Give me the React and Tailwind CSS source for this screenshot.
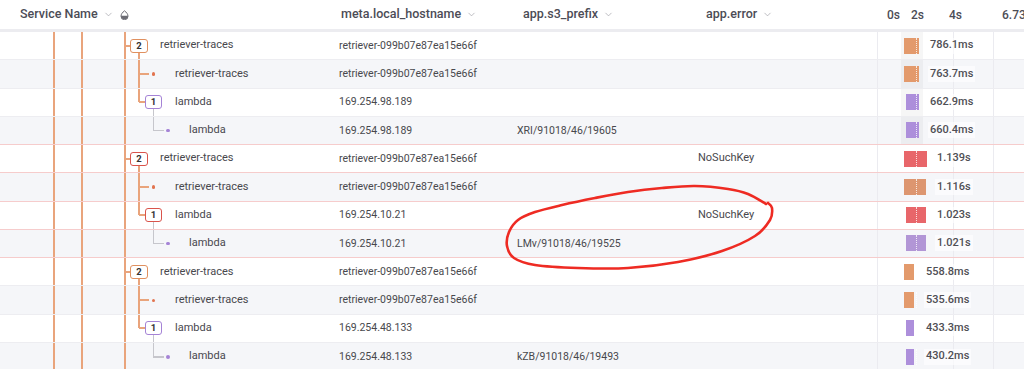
import React from 'react';
import { ChevronDown } from 'lucide-react';

const ORANGE = '#e0905f';
const RED = '#d9544c';
const PURPLE = '#a583d6';

const rows = [
  { type: 'p', box: ORANGE, name: 'retriever-traces', host: 'retriever-099b07e87ea15e66f', prefix: '', error: '', bar: '#e39a6c', barL: 44, barW: 15, label: '786.1ms', labelL: 70, band: true },
  { type: 'd1', dot: '#e2744f', name: 'retriever-traces', host: 'retriever-099b07e87ea15e66f', prefix: '', error: '', bar: '#e39a6c', barL: 44, barW: 15, label: '763.7ms', labelL: 70, band: true },
  { type: 'b', box: PURPLE, name: 'lambda', host: '169.254.98.189', prefix: '', error: '', bar: '#ad8fdb', barL: 46, barW: 13, label: '662.9ms', labelL: 70, band: true },
  { type: 'd2', dot: PURPLE, name: 'lambda', host: '169.254.98.189', prefix: 'XRI/91018/46/19605', error: '', bar: '#ad8fdb', barL: 46, barW: 13, label: '660.4ms', labelL: 70, band: true, pinkBottom: true },
  { type: 'p', box: RED, name: 'retriever-traces', host: 'retriever-099b07e87ea15e66f', prefix: '', error: 'NoSuchKey', bar: '#e8666a', barL: 44, barW: 23, label: '1.139s', labelL: 77, pinkBottom: true },
  { type: 'd1', dot: '#e2744f', name: 'retriever-traces', host: 'retriever-099b07e87ea15e66f', prefix: '', error: '', bar: '#dd9670', barL: 44, barW: 22, label: '1.116s', labelL: 77, pinkBottom: true },
  { type: 'b', box: RED, name: 'lambda', host: '169.254.10.21', prefix: '', error: 'NoSuchKey', bar: '#e8666a', barL: 46, barW: 20, label: '1.023s', labelL: 77, pinkBottom: true },
  { type: 'd2', dot: PURPLE, name: 'lambda', host: '169.254.10.21', prefix: 'LMv/91018/46/19525', error: '', bar: '#b296d6', barL: 46, barW: 20, label: '1.021s', labelL: 77, pinkBottom: true },
  { type: 'p', box: ORANGE, name: 'retriever-traces', host: 'retriever-099b07e87ea15e66f', prefix: '', error: '', bar: '#e39a6c', barL: 44, barW: 10, label: '558.8ms', labelL: 66 },
  { type: 'd1', dot: '#e2744f', name: 'retriever-traces', host: 'retriever-099b07e87ea15e66f', prefix: '', error: '', bar: '#e39a6c', barL: 44, barW: 10, label: '535.6ms', labelL: 66 },
  { type: 'b', box: PURPLE, name: 'lambda', host: '169.254.48.133', prefix: '', error: '', bar: '#ad8fdb', barL: 46, barW: 8, label: '433.3ms', labelL: 66 },
  { type: 'd2', dot: PURPLE, name: 'lambda', host: '169.254.48.133', prefix: 'kZB/91018/46/19493', error: '', bar: '#ad8fdb', barL: 46, barW: 8, label: '430.2ms', labelL: 66 },
];

const textPad = { p: 'pl-[160px]', d1: 'pl-[175px]', b: 'pl-[175px]', d2: 'pl-[189px]' };

// hand-drawn annotation loop
const loop = [[766,204],[748,194],[728,189],[695,186],[662,188],[628,192],[595,198],[562,205],[535,212],[518,220],[509,232],[507,246],[514,258],[535,265],[578,268],[628,268],[678,262],[722,251],[755,236],[770,220],[772,208],[768,203]];

function smoothPath(pts) {
  let d = `M${pts[0][0]},${pts[0][1]}`;
  for (let i = 0; i < pts.length - 1; i++) {
    const p0 = pts[i - 1] || pts[i];
    const p1 = pts[i];
    const p2 = pts[i + 1];
    const p3 = pts[i + 2] || p2;
    const c1 = [p1[0] + (p2[0] - p0[0]) / 6, p1[1] + (p2[1] - p0[1]) / 6];
    const c2 = [p2[0] - (p3[0] - p1[0]) / 6, p2[1] - (p3[1] - p1[1]) / 6];
    d += ` C${c1[0]},${c1[1]} ${c2[0]},${c2[1]} ${p2[0]},${p2[1]}`;
  }
  return d;
}

function TreeLines({ row }) {
  const line = 'absolute bg-[#e9a47c]';
  const gray = 'absolute bg-[#c6c6cc]';
  return (
    <>
      <div className={`${line} left-[53px] top-0 bottom-0 w-[2px]`} />
      <div className={`${line} left-[81px] top-0 bottom-0 w-[2px]`} />
      <div className={`${line} left-[124px] top-0 bottom-0 w-[2px]`} />
      {row.type === 'p' && (
        <>
          <div className={`${line} left-[125px] top-[calc(50%-1px)] w-[6px] h-[2px]`} />
          <div className={`${line} left-[138px] top-[calc(50%+7px)] bottom-0 w-[2px]`} />
          <div
            className="absolute left-[130px] top-[calc(50%-7px)] w-[18px] h-[14px] rounded-[3px] border-[1.5px] bg-white flex items-center justify-center text-[9.5px] font-bold text-[#333]"
            style={{ borderColor: row.box }}
          >
            2
          </div>
        </>
      )}
      {row.type === 'd1' && (
        <>
          <div className={`${line} left-[138px] top-0 bottom-0 w-[2px]`} />
          <div className={`${line} left-[139px] top-[calc(50%-1px)] w-[10px] h-[2px]`} />
          <div className="absolute left-[151.5px] top-[calc(50%-1.5px)] w-[3.5px] h-[3.5px] rounded-full" style={{ background: row.dot }} />
        </>
      )}
      {row.type === 'b' && (
        <>
          <div className={`${line} left-[138px] top-0 h-1/2 w-[2px]`} />
          <div className={`${line} left-[139px] top-[calc(50%-1px)] w-[7px] h-[2px]`} />
          <div className={`${gray} left-[152.5px] top-[calc(50%+7px)] bottom-0 w-[1.5px]`} />
          <div
            className="absolute left-[145px] top-[calc(50%-7px)] w-[17px] h-[14px] rounded-[3px] border-[1.5px] bg-white flex items-center justify-center text-[9.5px] font-bold text-[#333]"
            style={{ borderColor: row.box }}
          >
            1
          </div>
        </>
      )}
      {row.type === 'd2' && (
        <>
          <div className={`${gray} left-[152.5px] top-0 h-1/2 w-[1.5px]`} />
          <div className={`${gray} left-[153px] top-[calc(50%-0.5px)] w-[11px] h-[1.5px]`} />
          <div className="absolute left-[166px] top-[calc(50%-1.5px)] w-[3.5px] h-[3.5px] rounded-full" style={{ background: row.dot }} />
        </>
      )}
    </>
  );
}

function Row({ row, index }) {
  const bg = index % 2 === 0 ? 'bg-white' : 'bg-[#f5f6f9]';
  const border = row.pinkBottom ? 'border-[#f6cccc]' : 'border-[#ededf1]';
  return (
    <div className={`flex h-[28.27px] border-b ${border} ${bg} text-[10.5px] text-[#48484d]`}>
      <div className={`relative w-[339px] shrink-0 flex items-center text-[11px] ${textPad[row.type]}`}>
        <TreeLines row={row} />
        <span>{row.name}</span>
      </div>
      <div className="w-[178px] shrink-0 flex items-center">{row.host}</div>
      <div className="w-[181px] shrink-0 flex items-center">{row.prefix}</div>
      <div className="w-[162px] shrink-0 flex items-center text-[11px]">{row.error}</div>
      <div className="relative flex-1">
        <div className="absolute left-[17px] top-0 bottom-0 w-px bg-[#ebebf0]" />
        <div className="absolute left-[93px] top-0 bottom-0 w-px bg-[#ebebf0]" />
        <div className="absolute left-[133px] top-0 bottom-0 w-px bg-[#ebebf0]" />
        {row.band && <div className="absolute left-[41px] top-0 bottom-0 w-[22px] bg-black/[0.035]" />}
        <div
          className="absolute top-[calc(50%-8px)] h-[16px]"
          style={{ left: row.barL, width: row.barW, background: row.bar }}
        >
          <div className="absolute top-0 bottom-0 border-l border-dotted border-white/80" style={{ left: 56 - row.barL }} />
        </div>
        <div
          className="absolute top-[calc(50%-8px)] h-[16px] flex items-center px-[2px] bg-white/60 text-[11px] font-medium text-[#4f4f55]"
          style={{ left: row.labelL - 2 }}
        >
          {row.label}
        </div>
      </div>
    </div>
  );
}

function DropIcon() {
  return (
    <svg width="9" height="10" viewBox="0 0 9 10">
      <path d="M4.5 0.8 C6.6 2.4 8 4.2 8 6.2 A3.5 3.5 0 0 1 1 6.2 C1 4.2 2.4 2.4 4.5 0.8 Z" fill="none" stroke="#6b6b73" strokeWidth="1" />
      <path d="M1 5.8 L8 5.8 A3.5 3.5 0 0 1 1 5.8 Z" fill="#6b6b73" />
    </svg>
  );
}

export default function App() {
  return (
    <div className="relative w-[1024px] h-[369px] overflow-hidden bg-white" style={{ fontFamily: 'Roboto, "Liberation Sans", sans-serif' }}>
      {/* Header */}
      <div className="flex items-center h-[32px] border-b-[3px] border-[#ececf0] bg-white text-[12.5px] font-medium text-[#4c4c56]">
        <div className="w-[341px] shrink-0 flex items-center pl-[20px]">
          <span>Service Name</span>
          <ChevronDown size={11} strokeWidth={1.5} className="ml-[5px] text-[#a0a0a8]" />
          <span className="ml-[6px] flex items-center"><DropIcon /></span>
        </div>
        <div className="w-[182px] shrink-0 flex items-center">
          <span>meta.local_hostname</span>
          <ChevronDown size={11} strokeWidth={1.5} className="ml-[5px] text-[#a0a0a8]" />
        </div>
        <div className="w-[183px] shrink-0 flex items-center">
          <span>app.s3_prefix</span>
          <ChevronDown size={11} strokeWidth={1.5} className="ml-[5px] text-[#a0a0a8]" />
        </div>
        <div className="w-[181px] shrink-0 flex items-center">
          <span>app.error</span>
          <ChevronDown size={11} strokeWidth={1.5} className="ml-[5px] text-[#a0a0a8]" />
        </div>
        <div className="flex-1 flex items-center text-[12px] whitespace-nowrap">
          <span className="w-[24px] shrink-0">0s</span>
          <span className="w-[38px] shrink-0">2s</span>
          <span className="w-[53px] shrink-0">4s</span>
          <span>6.73</span>
        </div>
      </div>

      {/* Rows */}
      <div>
        {rows.map((row, i) => (
          <Row key={i} row={row} index={i} />
        ))}
      </div>

      {/* Red hand-drawn annotation */}
      <svg className="absolute inset-0 pointer-events-none" width="1024" height="369">
        <path d={smoothPath(loop)} fill="none" stroke="#ee2b23" strokeWidth="2.6" strokeLinecap="round" strokeLinejoin="round" />
      </svg>
    </div>
  );
}
